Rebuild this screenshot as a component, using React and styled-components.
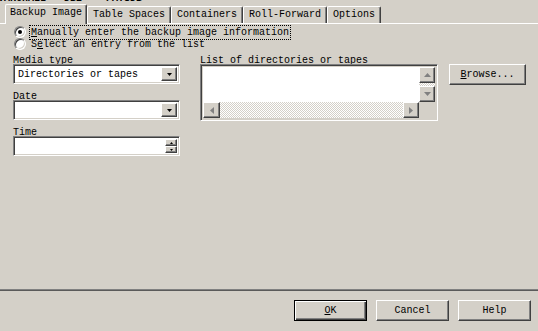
import styled, { createGlobalStyle, css } from "styled-components";

const Global = createGlobalStyle`
  html, body { margin: 0; padding: 0; background: #d4d0c8; }
  body { font-family: "Liberation Mono", "DejaVu Sans Mono", monospace; font-size: 10px; color: #000; }
`;

const raised = css`
  border-style: solid;
  border-width: 1px;
  border-color: #fff #404040 #404040 #fff;
  box-shadow: inset -1px -1px 0 #808080;
  background: #d4d0c8;
`;

const sunken = css`
  border-style: solid;
  border-width: 1px;
  border-color: #808080 #fff #fff #808080;
  box-shadow: inset 1px 1px 0 #404040, inset -1px -1px 0 #d4d0c8;
`;

const Window = styled.div`
  width: 538px;
  height: 331px;
  display: flex;
  flex-direction: column;
  overflow: hidden;
  background: #d4d0c8;
`;

const TopStrip = styled.div`
  height: 5px;
  overflow: hidden;
  white-space: pre;
  line-height: 10px;
  font-weight: bold;
  & > span { display: block; margin-top: -6px; margin-left: -2px; }
`;

const TabBar = styled.div`
  display: flex;
  align-items: flex-end;
  height: 18px;
  padding-left: 5px;
  position: relative;
  z-index: 1;
`;

const Tab = styled.div`
  height: 16px;
  line-height: 15px;
  padding: 0 ${({ $active }) => ($active ? "4px" : "5px")};
  border: 1px solid;
  border-color: #fff #404040 transparent #fff;
  border-bottom: none;
  border-radius: 2px 2px 0 0;
  box-shadow: inset -1px 0 0 #808080;
  white-space: pre;
  background: #d4d0c8;
  ${({ $active }) =>
    $active &&
    css`
      margin-bottom: -1px;
      height: 19px;
      line-height: 16px;
    `}
`;

const Panel = styled.div`
  flex: 1;
  border-top: 1px solid #fff;
  padding: 2px 0 0 0;
  display: flex;
  flex-direction: column;
`;

const RadioRow = styled.label`
  display: flex;
  align-items: center;
  height: 12px;
  padding-left: 14px;
  gap: 4px;
  white-space: pre;
`;

const RadioDot = styled.span`
  width: 12px;
  height: 12px;
  box-sizing: border-box;
  border-radius: 50%;
  background: #fff;
  border: 1px solid;
  border-color: #808080 #fff #fff #808080;
  box-shadow: inset 1px 1px 0 #404040, inset -1px -1px 0 #d4d0c8;
  display: flex;
  align-items: center;
  justify-content: center;
  &::after {
    content: "";
    width: 4px;
    height: 4px;
    border-radius: 50%;
    background: ${({ $checked }) => ($checked ? "#000" : "transparent")};
  }
`;

const RadioText = styled.span`
  line-height: 13px;
  padding: 0 1px;
  outline: ${({ $focus }) => ($focus ? "1px dotted #000" : "none")};
  outline-offset: 0;
`;

const Columns = styled.div`
  display: flex;
  align-items: flex-start;
  margin-top: 4px;
  padding-left: 13px;
`;

const LeftCol = styled.div`
  width: 167px;
  display: flex;
  flex-direction: column;
  gap: 6px;
`;

const Field = styled.div`
  display: flex;
  flex-direction: column;
`;

const Label = styled.div`
  height: 10px;
  line-height: 13px;
  white-space: pre;
`;

const Combo = styled.div`
  ${sunken};
  height: 20px;
  box-sizing: border-box;
  background: #fff;
  display: flex;
  align-items: center;
  padding: 2px 2px 2px 4px;
  white-space: pre;
`;

const ComboText = styled.span`
  flex: 1;
`;

const DropBtn = styled.span`
  ${raised};
  width: 16px;
  height: 14px;
  box-sizing: border-box;
  display: flex;
  align-items: center;
  justify-content: center;
`;

const SpinBox = styled.div`
  ${sunken};
  height: 20px;
  box-sizing: border-box;
  background: #fff;
  display: flex;
  justify-content: flex-end;
  padding: 2px;
`;

const SpinCol = styled.div`
  display: flex;
  flex-direction: column;
  width: 12px;
`;

const SpinBtn = styled.span`
  ${raised};
  flex: 1;
  box-sizing: border-box;
  display: flex;
  align-items: center;
  justify-content: center;
`;

const ListCol = styled.div`
  margin-left: 20px;
  display: flex;
  flex-direction: column;
`;

const ListBox = styled.div`
  ${sunken};
  width: 238px;
  height: 57px;
  box-sizing: border-box;
  padding: 2px;
  display: grid;
  grid-template-columns: 1fr 16px;
  grid-template-rows: 1fr 16px;
`;

const ListArea = styled.div`
  background: #fff;
`;

const VScroll = styled.div`
  display: flex;
  flex-direction: column;
  background: repeating-conic-gradient(#d4d0c8 0 25%, #fff 0 50%) 0 0 / 2px 2px;
`;

const HScroll = styled.div`
  display: flex;
  background: repeating-conic-gradient(#d4d0c8 0 25%, #fff 0 50%) 0 0 / 2px 2px;
`;

const ScrollBtn = styled.span`
  ${raised};
  width: ${({ $w }) => $w || 16}px;
  height: ${({ $h }) => $h || 16}px;
  box-sizing: border-box;
  display: flex;
  align-items: center;
  justify-content: center;
  margin-left: ${({ $push }) => ($push ? "auto" : "0")};
  margin-top: ${({ $pushY }) => ($pushY ? "auto" : "0")};
`;

const Corner = styled.div`
  background: #d4d0c8;
`;

const Button = styled.button`
  ${raised};
  font: inherit;
  color: #000;
  width: ${({ $w }) => $w}px;
  height: 21px;
  padding: 0;
  box-sizing: border-box;
  ${({ $default }) =>
    $default &&
    css`
      border: 1px solid #000;
      box-shadow: inset 1px 1px 0 #fff, inset -1px -1px 0 #404040,
        inset -2px -2px 0 #808080;
    `}
`;

const BrowseButton = styled(Button)`
  margin-left: 11px;
  margin-top: 10px;
`;

const Separator = styled.div`
  height: 1px;
  background: #5a5a5a;
  border-top: 1px solid #808080;
  margin-top: 2px;
`;

const Footer = styled.div`
  display: flex;
  justify-content: flex-end;
  gap: 9px;
  padding: 9px 7px 10px 0;
`;

const U = styled.span`
  text-decoration: underline;
`;

const Tri = ({ dir, color = "#000", size = 4 }) => {
  const s = size;
  const pts = {
    down: `0,0 ${s * 2 - 1},0 ${s - 0.5},${s}`,
    up: `0,${s} ${s * 2 - 1},${s} ${s - 0.5},0`,
    left: `${s},0 ${s},${s * 2 - 1} 0,${s - 0.5}`,
    right: `0,0 0,${s * 2 - 1} ${s},${s - 0.5}`,
  }[dir];
  const vert = dir === "up" || dir === "down";
  return (
    <svg width={vert ? s * 2 - 1 : s} height={vert ? s : s * 2 - 1}>
      <polygon points={pts} fill={color} />
    </svg>
  );
};

export default function App() {
  return (
    <Window>
      <Global />
      <TopStrip>
        <span>VARCHALL   DB2    PAYSDB</span>
      </TopStrip>
      <TabBar>
        <Tab $active>Backup Image</Tab>
        <Tab>Table Spaces</Tab>
        <Tab>Containers</Tab>
        <Tab>Roll-Forward</Tab>
        <Tab>Options</Tab>
      </TabBar>
      <Panel>
        <RadioRow>
          <RadioDot $checked />
          <RadioText $focus>
            <U>M</U>anually enter the backup image information
          </RadioText>
        </RadioRow>
        <RadioRow>
          <RadioDot />
          <RadioText>
            S<U>e</U>lect an entry from the list
          </RadioText>
        </RadioRow>
        <Columns>
          <LeftCol>
            <Field>
              <Label>Media type</Label>
              <Combo>
                <ComboText>Directories or tapes</ComboText>
                <DropBtn>
                  <Tri dir="down" size={3} />
                </DropBtn>
              </Combo>
            </Field>
            <Field>
              <Label>Date</Label>
              <Combo>
                <ComboText />
                <DropBtn>
                  <Tri dir="down" size={3} />
                </DropBtn>
              </Combo>
            </Field>
            <Field>
              <Label>Time</Label>
              <SpinBox>
                <SpinCol>
                  <SpinBtn>
                    <Tri dir="up" size={2} />
                  </SpinBtn>
                  <SpinBtn>
                    <Tri dir="down" size={2} />
                  </SpinBtn>
                </SpinCol>
              </SpinBox>
            </Field>
          </LeftCol>
          <ListCol>
            <Label>List of directories or tapes</Label>
            <ListBox>
              <ListArea />
              <VScroll>
                <ScrollBtn $h={16}>
                  <Tri dir="up" color="#808080" />
                </ScrollBtn>
                <ScrollBtn $h={16} $pushY>
                  <Tri dir="down" color="#808080" />
                </ScrollBtn>
              </VScroll>
              <HScroll>
                <ScrollBtn $w={17}>
                  <Tri dir="left" color="#808080" />
                </ScrollBtn>
                <ScrollBtn $w={16} $push>
                  <Tri dir="right" color="#808080" />
                </ScrollBtn>
              </HScroll>
              <Corner />
            </ListBox>
          </ListCol>
          <BrowseButton $w={77}>
            <U>B</U>rowse...
          </BrowseButton>
        </Columns>
      </Panel>
      <Separator />
      <Footer>
        <Button $w={73} $default>
          <U>O</U>K
        </Button>
        <Button $w={73}>Cancel</Button>
        <Button $w={73}>Help</Button>
      </Footer>
    </Window>
  );
}
